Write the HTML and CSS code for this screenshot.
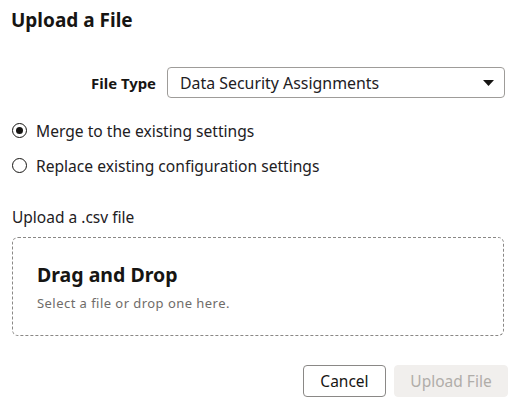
FILE: index.html
```html
<!DOCTYPE html>
<html>
<head>
<meta charset="utf-8">
<link rel="stylesheet" href="styles.css">
</head>
<body>
<div class="dialog">
  <h1 class="title">Upload a File</h1>
  <div class="field-row">
    <label class="field-label">File Type</label>
    <div class="select">
      <span class="select-value">Data Security Assignments</span>
      <svg class="caret" width="11" height="6" viewBox="0 0 11 6"><path d="M0 0 H11 L5.5 6 Z" fill="#161513"/></svg>
    </div>
  </div>
  <div class="radios">
    <div class="radio-row">
      <span class="radio checked"></span>
      <span class="radio-label">Merge to the existing settings</span>
    </div>
    <div class="radio-row">
      <span class="radio"></span>
      <span class="radio-label">Replace existing configuration settings</span>
    </div>
  </div>
  <div class="upload-label">Upload a .csv file</div>
  <div class="dropzone">
    <div class="drop-title">Drag and Drop</div>
    <div class="drop-sub">Select a file or drop one here.</div>
  </div>
  <div class="footer">
    <button class="btn btn-cancel">Cancel</button>
    <button class="btn btn-disabled">Upload File</button>
  </div>
</div>
</body>
</html>
```
FILE: styles.css
```css
* { box-sizing: border-box; }
html, body { margin: 0; padding: 0; background: #fff; }
body {
  font-family: "Noto Sans", "Open Sans", sans-serif;
  color: #161513;
  width: 513px;
  height: 400px;
  overflow: hidden;
}
.dialog {
  padding: 6px 5px 0 12px;
  display: flex;
  flex-direction: column;
}
.title {
  margin: 0 0 0 -1px;
  font-size: 19px;
  font-weight: 700;
  line-height: 28px;
}
.field-row {
  display: flex;
  align-items: center;
  margin-top: 33px;
  gap: 11px;
}
.field-label {
  width: 144px;
  text-align: right;
  font-size: 14.9px;
  font-weight: 700;
}
.select {
  flex: 0 0 338px;
  height: 31px;
  border: 1px solid #9e9c99;
  border-radius: 4px;
  display: flex;
  align-items: center;
  justify-content: space-between;
  padding: 0 10px 0 12px;
}
.select-value { font-size: 15.9px; color: #22201e; }
.caret { display: block; }
.radios {
  display: flex;
  flex-direction: column;
  gap: 14px;
  margin-top: 22px;
}
.radio-row {
  display: flex;
  align-items: center;
  gap: 9px;
  height: 21px;
}
.radio {
  width: 15px;
  height: 15px;
  border: 1.3px solid #161513;
  border-radius: 50%;
  display: flex;
  align-items: center;
  justify-content: center;
  flex: none;
}
.radio.checked::after {
  content: "";
  width: 7px;
  height: 7px;
  border-radius: 50%;
  background: #161513;
}
.radio-label { font-size: 15.6px; color: #22201e; }
.upload-label {
  margin-top: 31px;
  font-size: 15.5px;
  line-height: 20px;
  color: #22201e;
}
.dropzone {
  margin-top: 10px;
  width: 492px;
  height: 99px;
  border: 1px dashed #8a8886;
  border-radius: 6px;
  padding: 24px 24px;
}
.drop-title {
  font-size: 19.5px;
  font-weight: 700;
  line-height: 26px;
}
.drop-sub {
  margin-top: 6px;
  font-size: 13px;
  letter-spacing: 0.45px;
  color: #6f6c69;
}
.footer {
  display: flex;
  justify-content: flex-end;
  gap: 8px;
  margin-top: 29px;
}
.btn {
  height: 32px;
  font-family: inherit;
  font-size: 15.5px;
  border-radius: 4px;
  padding: 0;
  white-space: nowrap;
}
.btn-cancel {
  width: 83px;
  background: #fff;
  border: 1px solid #8a8886;
  color: #161513;
}
.btn-disabled {
  width: 114px;
  background: #f1efed;
  border: 1px solid #f1efed;
  color: #b0ada9;
}
```
